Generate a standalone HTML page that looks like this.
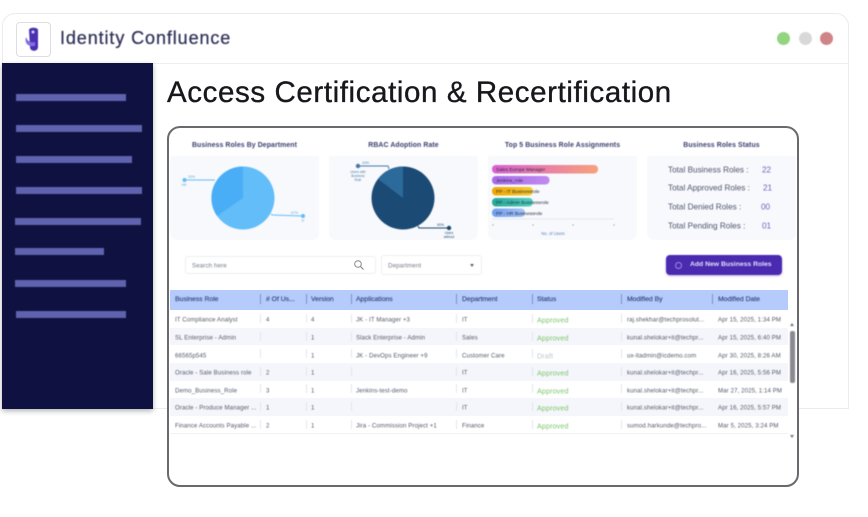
<!DOCTYPE html>
<html><head><meta charset="utf-8">
<style>
html,body{margin:0;padding:0;background:#fff}
#p{position:relative;width:868px;height:517px;overflow:hidden;background:#fff;font-family:"Liberation Sans",sans-serif}
#p div{position:absolute;box-sizing:border-box}
.t{white-space:nowrap;line-height:1}
.bar{background:#5f62ae;height:6.5px;filter:blur(.4px)}
.soft{filter:blur(.45px)}
.panel{top:136px;height:104px;width:149px;background:#f7f9fc;border-radius:7px;overflow:hidden}
.ph{left:0;top:0;right:0;height:20px;background:#fff;text-align:center;font-size:6.9px;font-weight:bold;color:#3a3f6e;line-height:20px;letter-spacing:.1px}
.row{left:170px;width:618px;height:17.6px}
.c{font-size:6.1px;color:#565a6a;white-space:nowrap;line-height:1;letter-spacing:.1px;transform:translateY(1.5px)}
.h{font-size:6.8px;color:#33427e;white-space:nowrap;line-height:1;top:297px;-webkit-text-stroke:.15px #33427e}
.sep{width:1px;background:#7f93c4;top:294px;height:10px}
.s{width:1px;background:#e4e6ee;height:9px}
.st{font-size:8.2px;color:#50556e;white-space:nowrap;line-height:1;transform:translateY(.5px)}
.sv{font-size:8.2px;color:#6f5fc0;white-space:nowrap;line-height:1;transform:translateY(.5px)}
.a{color:#7cc66c !important;font-size:7.2px !important}
</style></head><body>
<div id="p">
<!-- outer window -->
<div style="left:2px;top:13px;width:847px;height:396px;border:1px solid #ececee;border-radius:13px 13px 0 0"></div>
<div style="left:2px;top:63px;width:847px;height:1px;background:#eeeeef"></div>
<!-- logo -->
<div style="left:16px;top:22px;width:35px;height:35px;border:1px solid #dedee2;border-radius:4px;background:#fff"></div>
<svg style="position:absolute;left:16px;top:22px;filter:blur(.4px)" width="35" height="35" viewBox="0 0 35 35"><path d="M13 8C13 5 22 5 22 8L22 25C22 30 14 30 14 25Z" fill="#4a2fb0"/><path d="M10 15C8 21 12 25 19 24L19 20C15 21 12 20 10 15Z" fill="#7f6fe0"/><circle cx="17" cy="10" r="1.5" fill="#d9d2fa"/></svg>
<div class="t soft" style="left:60px;top:29px;font-size:18px;color:#33355a;letter-spacing:.9px;-webkit-text-stroke:.3px #33355a">Identity Confluence</div>
<!-- dots -->
<div class="soft" style="left:777px;top:32px;width:13px;height:13px;border-radius:50%;background:#92d47f"></div>
<div class="soft" style="left:799px;top:32px;width:13px;height:13px;border-radius:50%;background:#d8d8d8"></div>
<div class="soft" style="left:820px;top:32px;width:13px;height:13px;border-radius:50%;background:#cf8587"></div>
<!-- sidebar -->
<div style="left:2px;top:63px;width:151px;height:346px;background:#0f1140;box-shadow:0 2px 5px rgba(0,0,0,.3)"></div>
<div class="bar" style="left:16px;top:94px;width:110px"></div>
<div class="bar" style="left:16px;top:125px;width:126px"></div>
<div class="bar" style="left:16px;top:156px;width:116px"></div>
<div class="bar" style="left:16px;top:187px;width:126px"></div>
<div class="bar" style="left:15px;top:218px;width:126px"></div>
<div class="bar" style="left:15px;top:248px;width:89px"></div>
<div class="bar" style="left:15px;top:280px;width:111px"></div>
<div class="bar" style="left:16px;top:311px;width:110px"></div>
<!-- title -->
<div class="t" style="left:167px;top:78px;font-size:29.5px;color:#17171c;letter-spacing:.6px;-webkit-text-stroke:.35px #17171c">Access Certification &amp; Recertification</div>
<!-- inner card -->
<div style="left:167px;top:126px;width:632px;height:361px;background:#fff;border:2px solid #6a6a6e;border-radius:13px;filter:blur(.3px)"></div>
<!-- panels -->
<div class="panel soft" style="left:170px"><div class="ph">Business Roles By Department</div></div>
<div class="panel soft" style="left:329px"><div class="ph">RBAC Adoption Rate</div></div>
<div class="panel soft" style="left:488px"><div class="ph">Top 5 Business Role Assignments</div></div>
<div class="panel soft" style="left:647px;width:149px"><div class="ph">Business Roles Status</div></div>
<!-- pies -->
<svg style="position:absolute;left:170px;top:156px;filter:blur(.4px)" width="320" height="84" viewBox="170 156 320 84">
<circle cx="243" cy="198" r="31.5" fill="#62bdf9"/>
<path d="M243 198L243 166.5A31.5 31.5 0 0 0 217 216Z" fill="#4aaef6"/>
<path d="M185 180L215 180" stroke="#62bdf9" stroke-width="1" fill="none"/>
<circle cx="184.500" cy="180" r="2" fill="#62bdf9"/>
<path d="M271 214L272 215L303 216" stroke="#62bdf9" stroke-width="1" fill="none"/>
<circle cx="303" cy="216" r="2" fill="#62bdf9"/>
<text x="188" y="178" font-size="3.500" fill="#6aa8d8" font-family="Liberation Sans">33%</text>
<text x="291" y="214" font-size="3.500" fill="#6aa8d8" font-family="Liberation Sans">67%</text>
<text x="184" y="186" font-size="3.500" fill="#6aa8d8" text-anchor="middle" font-family="Liberation Sans">HR</text>
<text x="303" y="222" font-size="3.500" fill="#6aa8d8" text-anchor="middle" font-family="Liberation Sans">IT</text>
<circle cx="403" cy="198" r="31.5" fill="#1b4a74"/>
<path d="M403 198L403 166.5A31.500 31.500 0 0 0 378 179Z" fill="#2d6a9c"/>
<path d="M358 166L388 166L389 169" stroke="#447ba8" stroke-width="1" fill="none"/>
<circle cx="358" cy="166" r="2.200" fill="#447ba8"/>
<path d="M418 226L419 228L449 228" stroke="#1b4a74" stroke-width="1" fill="none"/>
<circle cx="449" cy="228" r="2.200" fill="#1b4a74"/>
<text x="362" y="164" font-size="3.500" fill="#4a7aa5" font-family="Liberation Sans">10%</text>
<text x="437" y="226" font-size="3.500" fill="#1b4a74" font-family="Liberation Sans">90%</text>
<text x="358" y="173" font-size="3.300" fill="#4a7aa5" text-anchor="middle" font-family="Liberation Sans">Users with</text>
<text x="358" y="177" font-size="3.300" fill="#4a7aa5" text-anchor="middle" font-family="Liberation Sans">Business</text>
<text x="358" y="181" font-size="3.300" fill="#4a7aa5" text-anchor="middle" font-family="Liberation Sans">Role</text>
<text x="449" y="234" font-size="3.300" fill="#1b4a74" text-anchor="middle" font-family="Liberation Sans">Users</text>
<text x="449" y="238" font-size="3.300" fill="#1b4a74" text-anchor="middle" font-family="Liberation Sans">without</text>
</svg>
<!-- bars -->
<svg style="position:absolute;left:488px;top:156px;filter:blur(.4px)" width="149" height="84" viewBox="488 156 149 84">
<defs><linearGradient id="g1"><stop offset="0" stop-color="#d85fd0"/><stop offset="1" stop-color="#f8a07c"/></linearGradient>
<linearGradient id="g2"><stop offset="0" stop-color="#a869e8"/><stop offset="1" stop-color="#c08af0"/></linearGradient>
<linearGradient id="g3"><stop offset="0" stop-color="#f0a500"/><stop offset="1" stop-color="#f7cb2e"/></linearGradient>
<linearGradient id="g4"><stop offset="0" stop-color="#26a69a"/><stop offset="1" stop-color="#4fd0bd"/></linearGradient>
<linearGradient id="g5"><stop offset="0" stop-color="#6f9cf0"/><stop offset="1" stop-color="#a6c4f5"/></linearGradient></defs>
<rect x="492" y="165" width="106" height="8.500" rx="4" fill="url(#g1)"/>
<rect x="492" y="176" width="57.500" height="8.500" rx="4" fill="url(#g2)"/>
<rect x="492" y="187" width="41" height="8.500" rx="4" fill="url(#g3)"/>
<rect x="492" y="198" width="41" height="8.500" rx="4" fill="url(#g4)"/>
<rect x="492" y="208.500" width="33" height="8.500" rx="4" fill="url(#g5)"/>
<g font-size="4.800" fill="#2a2d45" font-family="Liberation Sans">
<text x="496" y="170.800">Sales Europe Manager</text>
<text x="496" y="181.800">Jenkins_role</text>
<text x="496" y="192.800">PP - IT Businessrole</text>
<text x="496" y="203.800">PP - Admin Businessrole</text>
<text x="496" y="214.800">PP - HR Businessrole</text>
</g>
<line x1="492" y1="219" x2="614" y2="219" stroke="#dfe2ea" stroke-width=".8"/>
<g fill="#a8acb8"><circle cx="493" cy="225" r=".7"/><circle cx="533" cy="225" r=".7"/><circle cx="573" cy="225" r=".7"/><circle cx="614" cy="225" r=".7"/></g>
<text x="553" y="235" font-size="4.200" fill="#5d7fc8" text-anchor="middle" font-family="Liberation Sans">No. of Users</text>
</svg>
<!-- status -->
<div class="st soft" style="left:668px;top:166px">Total Business Roles :</div><div class="sv soft" style="left:762px;top:166px">22</div>
<div class="st soft" style="left:668px;top:184px">Total Approved Roles :</div><div class="sv soft" style="left:763px;top:184px">21</div>
<div class="st soft" style="left:668px;top:203px">Total Denied Roles :</div><div class="sv soft" style="left:761px;top:203px">00</div>
<div class="st soft" style="left:668px;top:222px">Total Pending Roles :</div><div class="sv soft" style="left:762px;top:222px">01</div>
<!-- search -->
<div class="soft" style="left:185px;top:256px;width:191px;height:18px;border:1px solid #eceef2;border-radius:3px;background:#fff"></div>
<div class="c soft" style="left:192px;top:262px;color:#777b88;font-size:6.200px">Search here</div>
<svg style="position:absolute;left:353px;top:259px;filter:blur(.3px)" width="12" height="12" viewBox="0 0 12 12"><circle cx="5" cy="5" r="3.300" fill="none" stroke="#888" stroke-width="1"/><path d="M7.500 7.500L10.500 10.500" stroke="#888" stroke-width="1.200"/></svg>
<div class="soft" style="left:381px;top:255px;width:101px;height:20px;border:1px solid #eceef2;border-radius:3px;background:#fff"></div>
<div class="c soft" style="left:388px;top:262px;color:#777b88;font-size:6.200px">Department</div>
<div class="soft" style="left:470px;top:264px;width:0;height:0;border-left:2.500px solid transparent;border-right:2.500px solid transparent;border-top:3px solid #666"></div>
<!-- button -->
<div class="soft" style="left:666px;top:255px;width:116px;height:20px;border-radius:4px;background:#4a2bb0;box-shadow:0 1px 2px rgba(74,43,176,.35)"></div>
<div class="soft" style="left:675px;top:262px;width:7px;height:7px;border:1px solid #9d8ce0;border-radius:50%"></div>
<div class="t soft" style="left:690px;top:262px;font-size:6.800px;font-weight:bold;color:#e4dffa">Add New Business Roles</div>
<!-- table -->
<div style="left:170px;top:290px;width:618px;height:20px;background:#b5cbfb;filter:blur(.3px)"></div>
<div class="row" style="top:327.500px;background:#f5f6fb"></div>
<div class="row" style="top:363px;background:#f5f6fb"></div>
<div class="row" style="top:398px;background:#f5f6fb"></div>
<div class="row" style="top:433px;height:1px;background:#f1f2f6"></div>
<div class="soft" id="tb" style="left:0;top:0;width:868px;height:517px">
<div class="h" style="left:175px">Business Role</div>
<div class="h" style="left:266px"># Of Us...</div>
<div class="h" style="left:311px">Version</div>
<div class="h" style="left:356px">Applications</div>
<div class="h" style="left:462px">Department</div>
<div class="h" style="left:537px">Status</div>
<div class="h" style="left:627px">Modified By</div>
<div class="h" style="left:718px">Modified Date</div>
<div class="sep" style="left:260px"></div><div class="sep" style="left:306px"></div><div class="sep" style="left:351px"></div><div class="sep" style="left:456px"></div><div class="sep" style="left:532px"></div><div class="sep" style="left:621px"></div><div class="sep" style="left:712px"></div>

<div class="c" style="left:175px;top:316px">IT Compliance Analyst</div><div class="c" style="left:266px;top:316px">4</div><div class="c" style="left:311px;top:316px">4</div><div class="c" style="left:356px;top:316px">JK - IT Manager +3</div><div class="c" style="left:462px;top:316px">IT</div><div class="c a" style="left:537px;top:315px">Approved</div><div class="c" style="left:627px;top:316px">raj.shekhar@techprosolut...</div><div class="c" style="left:718px;top:316px">Apr 15, 2025, 1:34 PM</div>

<div class="c" style="left:175px;top:334px">SL Enterprise - Admin</div><div class="c" style="left:311px;top:334px">1</div><div class="c" style="left:356px;top:334px">Slack Enterprise - Admin</div><div class="c" style="left:462px;top:334px">Sales</div><div class="c a" style="left:537px;top:333px">Approved</div><div class="c" style="left:627px;top:334px">kunal.shelokar+it@techpr...</div><div class="c" style="left:718px;top:334px">Apr 15, 2025, 6:40 PM</div>

<div class="c" style="left:175px;top:351.500px">66565p545</div><div class="c" style="left:311px;top:351.500px">1</div><div class="c" style="left:356px;top:351.500px">JK - DevOps Engineer +9</div><div class="c" style="left:462px;top:351.500px">Customer Care</div><div class="c a" style="left:537px;top:350.500px;color:#c0c4cc !important">Draft</div><div class="c" style="left:627px;top:351.500px">ux-itadmin@icdemo.com</div><div class="c" style="left:718px;top:351.500px">Apr 30, 2025, 8:26 AM</div>

<div class="c" style="left:175px;top:369px">Oracle - Sale Business role</div><div class="c" style="left:266px;top:369px">2</div><div class="c" style="left:311px;top:369px">1</div><div class="c" style="left:462px;top:369px">IT</div><div class="c a" style="left:537px;top:368px">Approved</div><div class="c" style="left:627px;top:369px">kunal.shelokar+it@techpr...</div><div class="c" style="left:718px;top:369px">Apr 16, 2025, 5:56 PM</div>

<div class="c" style="left:175px;top:386.500px">Demo_Business_Role</div><div class="c" style="left:266px;top:386.500px">3</div><div class="c" style="left:311px;top:386.500px">1</div><div class="c" style="left:356px;top:386.500px">Jenkins-test-demo</div><div class="c" style="left:462px;top:386.500px">IT</div><div class="c a" style="left:537px;top:385.500px">Approved</div><div class="c" style="left:627px;top:386.500px">kunal.shelokar+it@techpr...</div><div class="c" style="left:718px;top:386.500px">Mar 27, 2025, 1:14 PM</div>

<div class="c" style="left:175px;top:404px">Oracle - Produce Manager ...</div><div class="c" style="left:266px;top:404px">1</div><div class="c" style="left:311px;top:404px">1</div><div class="c" style="left:462px;top:404px">IT</div><div class="c a" style="left:537px;top:403px">Approved</div><div class="c" style="left:627px;top:404px">kunal.shelokar+it@techpr...</div><div class="c" style="left:718px;top:404px">Apr 16, 2025, 5:57 PM</div>

<div class="c" style="left:175px;top:422px">Finance Accounts Payable ...</div><div class="c" style="left:266px;top:422px">2</div><div class="c" style="left:311px;top:422px">1</div><div class="c" style="left:356px;top:422px">Jira - Commission Project +1</div><div class="c" style="left:462px;top:422px">Finance</div><div class="c a" style="left:537px;top:421px">Approved</div><div class="c" style="left:627px;top:422px">sumod.harkunde@techpro...</div><div class="c" style="left:718px;top:422px">Mar 5, 2025, 3:24 PM</div>

<div class="s" style="left:260px;top:314px"></div><div class="s" style="left:306px;top:314px"></div><div class="s" style="left:351px;top:314px"></div><div class="s" style="left:456px;top:314px"></div><div class="s" style="left:532px;top:314px"></div><div class="s" style="left:621px;top:314px"></div>
<div class="s" style="left:260px;top:332px"></div><div class="s" style="left:306px;top:332px"></div><div class="s" style="left:351px;top:332px"></div><div class="s" style="left:456px;top:332px"></div><div class="s" style="left:532px;top:332px"></div><div class="s" style="left:621px;top:332px"></div>
<div class="s" style="left:260px;top:349px"></div><div class="s" style="left:306px;top:349px"></div><div class="s" style="left:351px;top:349px"></div><div class="s" style="left:456px;top:349px"></div><div class="s" style="left:532px;top:349px"></div><div class="s" style="left:621px;top:349px"></div>
<div class="s" style="left:260px;top:367px"></div><div class="s" style="left:306px;top:367px"></div><div class="s" style="left:351px;top:367px"></div><div class="s" style="left:456px;top:367px"></div><div class="s" style="left:532px;top:367px"></div><div class="s" style="left:621px;top:367px"></div>
<div class="s" style="left:260px;top:384px"></div><div class="s" style="left:306px;top:384px"></div><div class="s" style="left:351px;top:384px"></div><div class="s" style="left:456px;top:384px"></div><div class="s" style="left:532px;top:384px"></div><div class="s" style="left:621px;top:384px"></div>
<div class="s" style="left:260px;top:402px"></div><div class="s" style="left:306px;top:402px"></div><div class="s" style="left:351px;top:402px"></div><div class="s" style="left:456px;top:402px"></div><div class="s" style="left:532px;top:402px"></div><div class="s" style="left:621px;top:402px"></div>
<div class="s" style="left:260px;top:420px"></div><div class="s" style="left:306px;top:420px"></div><div class="s" style="left:351px;top:420px"></div><div class="s" style="left:456px;top:420px"></div><div class="s" style="left:532px;top:420px"></div><div class="s" style="left:621px;top:420px"></div>
</div>
<!-- scrollbar -->
<div class="soft" style="left:790px;top:331px;width:5px;height:52px;background:#8a8a90;border-radius:2px"></div>
<div class="soft" style="left:790px;top:323px;width:0;height:0;border-left:2.500px solid transparent;border-right:2.500px solid transparent;border-bottom:3px solid #777"></div>
<div class="soft" style="left:790px;top:435px;width:0;height:0;border-left:2.500px solid transparent;border-right:2.500px solid transparent;border-top:3px solid #777"></div>
</div>
</body></html>
